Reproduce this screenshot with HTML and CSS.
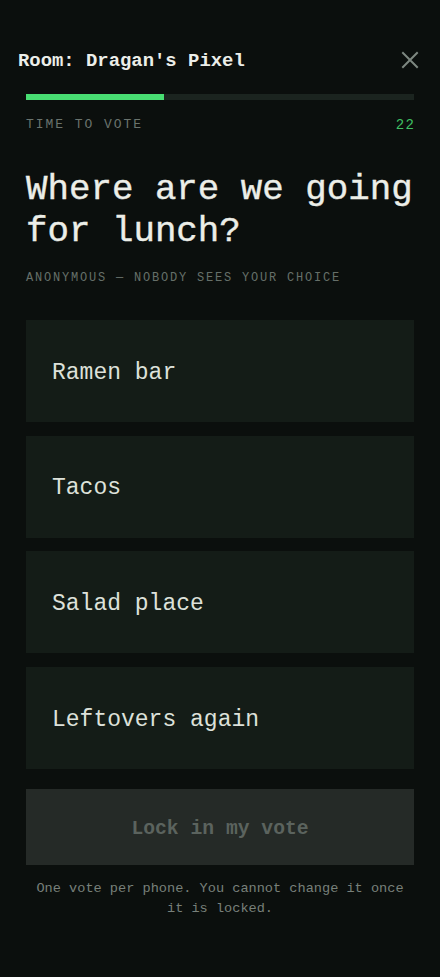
FILE: index.html
```html
<!DOCTYPE html>
<html lang="en">
<head>
<meta charset="utf-8">
<title>Vote</title>
<link rel="stylesheet" href="styles.css">
</head>
<body>
<main class="app">
  <header class="top">
    <h1 class="room">Room: Dragan's Pixel</h1>
    <button class="close" aria-label="Close">
      <svg viewBox="0 0 24 24" width="24" height="24"><path d="M5 5 L19 19 M19 5 L5 19" stroke="#7d8780" stroke-width="2" stroke-linecap="square" fill="none"/></svg>
    </button>
  </header>
  <div class="progress"><div class="fill" style="width:35.6%"></div></div>
  <div class="timer">
    <span class="label">TIME TO VOTE</span>
    <span class="count">22</span>
  </div>
  <h2 class="question">Where are we going for lunch?</h2>
  <p class="note">ANONYMOUS — NOBODY SEES YOUR CHOICE</p>
  <ul class="options">
    <li class="option">Ramen bar</li>
    <li class="option">Tacos</li>
    <li class="option">Salad place</li>
    <li class="option">Leftovers again</li>
  </ul>
  <button class="lock" disabled>Lock in my vote</button>
  <p class="foot">One vote per phone. You cannot change it once it is locked.</p>
</main>
</body>
</html>
```
FILE: styles.css
```css
* { box-sizing: border-box; }
html, body {
  margin: 0;
  padding: 0;
  background: #0b0f0d;
}
body {
  font-family: "Liberation Mono", "DejaVu Sans Mono", monospace;
  color: #e8ebe5;
}
.app {
  width: 440px;
  padding: 49px 26px 40px;
  display: flex;
  flex-direction: column;
}
.top {
  display: flex;
  align-items: center;
  justify-content: space-between;
  margin: 0 -8px;
  height: 24px;
}
.room {
  margin: 0;
  font-size: 18.9px;
  line-height: 24px;
  font-weight: 700;
  color: #eceee9;
}
.close {
  width: 24px;
  height: 24px;
  padding: 0;
  border: 0;
  background: none;
  display: block;
  margin-top: -2px;
}
.close svg { display: block; }
.progress {
  margin-top: 21px;
  height: 6px;
  background: #1b241f;
}
.fill {
  height: 100%;
  background: #48dd72;
}
.timer {
  margin-top: 17px;
  display: flex;
  justify-content: space-between;
  align-items: center;
  height: 16px;
}
.label {
  font-size: 13px;
  letter-spacing: 0.15em;
  line-height: 16px;
  color: #6a736d;
}
.count {
  font-size: 14px;
  letter-spacing: 0.1em;
  margin-right: -1.4px;
  line-height: 16px;
  color: #3fbf63;
}
.question {
  margin: 36px 0 0;
  font-size: 35.8px;
  line-height: 42px;
  font-weight: 400;
  color: #eceee8;
  -webkit-text-stroke: 0.4px #eceee8;
}
.note {
  margin: 17px 0 0;
  font-size: 12px;
  line-height: 16px;
  letter-spacing: 0.15em;
  color: #666f69;
}
.options {
  list-style: none;
  margin: 34px 0 0;
  padding: 0;
  display: flex;
  flex-direction: column;
  gap: 13.7px;
}
.option {
  height: 102px;
  display: flex;
  align-items: center;
  padding: 3px 26px 0;
  background: #141c17;
  font-size: 23px;
  color: #dde1da;
}
.lock {
  margin-top: 20px;
  height: 76px;
  border: 0;
  background: #252a27;
  color: #5b635e;
  font-family: inherit;
  font-size: 19.7px;
  font-weight: 700;
  padding: 4px 0 0;
}
.foot {
  margin: 14px 0 0;
  text-align: center;
  font-size: 13.6px;
  line-height: 20px;
  color: #78807a;
  padding: 0 8px;
}
```
